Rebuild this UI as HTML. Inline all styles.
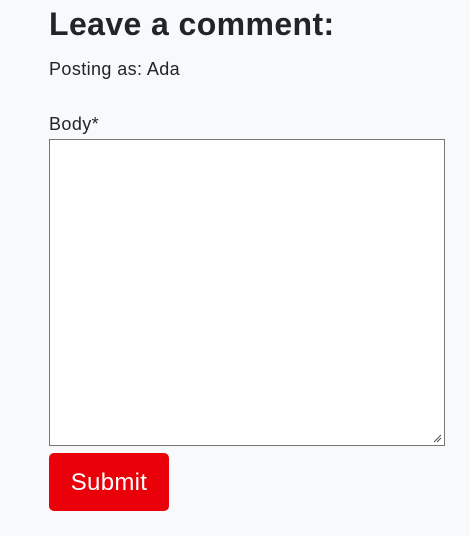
<!DOCTYPE html>
<html><head><style>
html,body{margin:0;padding:0;background:#f8f9fa;width:470px;height:536px;overflow:hidden;font-family:"Liberation Sans",sans-serif;color:#212529}
h2{position:absolute;left:49px;top:6px;margin:0;font-size:32px;font-weight:bold;line-height:36px;letter-spacing:0.4px}
.p{position:absolute;left:49px;top:59px;font-size:18px;letter-spacing:0.4px}
.l{position:absolute;left:49px;top:114px;font-size:18px;letter-spacing:0.4px}
.ta{position:absolute;left:49px;top:139px;width:394px;height:305px;background:#fff;border:1px solid #767676}
.btn{position:absolute;left:49px;top:453px;width:120px;height:58px;background:#e90008;color:#fff;border-radius:5px;font-size:24px;line-height:60px;text-align:center;letter-spacing:0.3px}
</style></head><body>
<h2>Leave a comment:</h2>
<div class="p">Posting as: Ada</div>
<div class="l">Body*</div>
<div class="ta"><svg style="position:absolute;right:2px;bottom:2px" width="9" height="9"><path d="M1 8L8 1M4 8L8 4" stroke="#555" stroke-width="1"/></svg></div>
<div class="btn">Submit</div>
</body></html>
